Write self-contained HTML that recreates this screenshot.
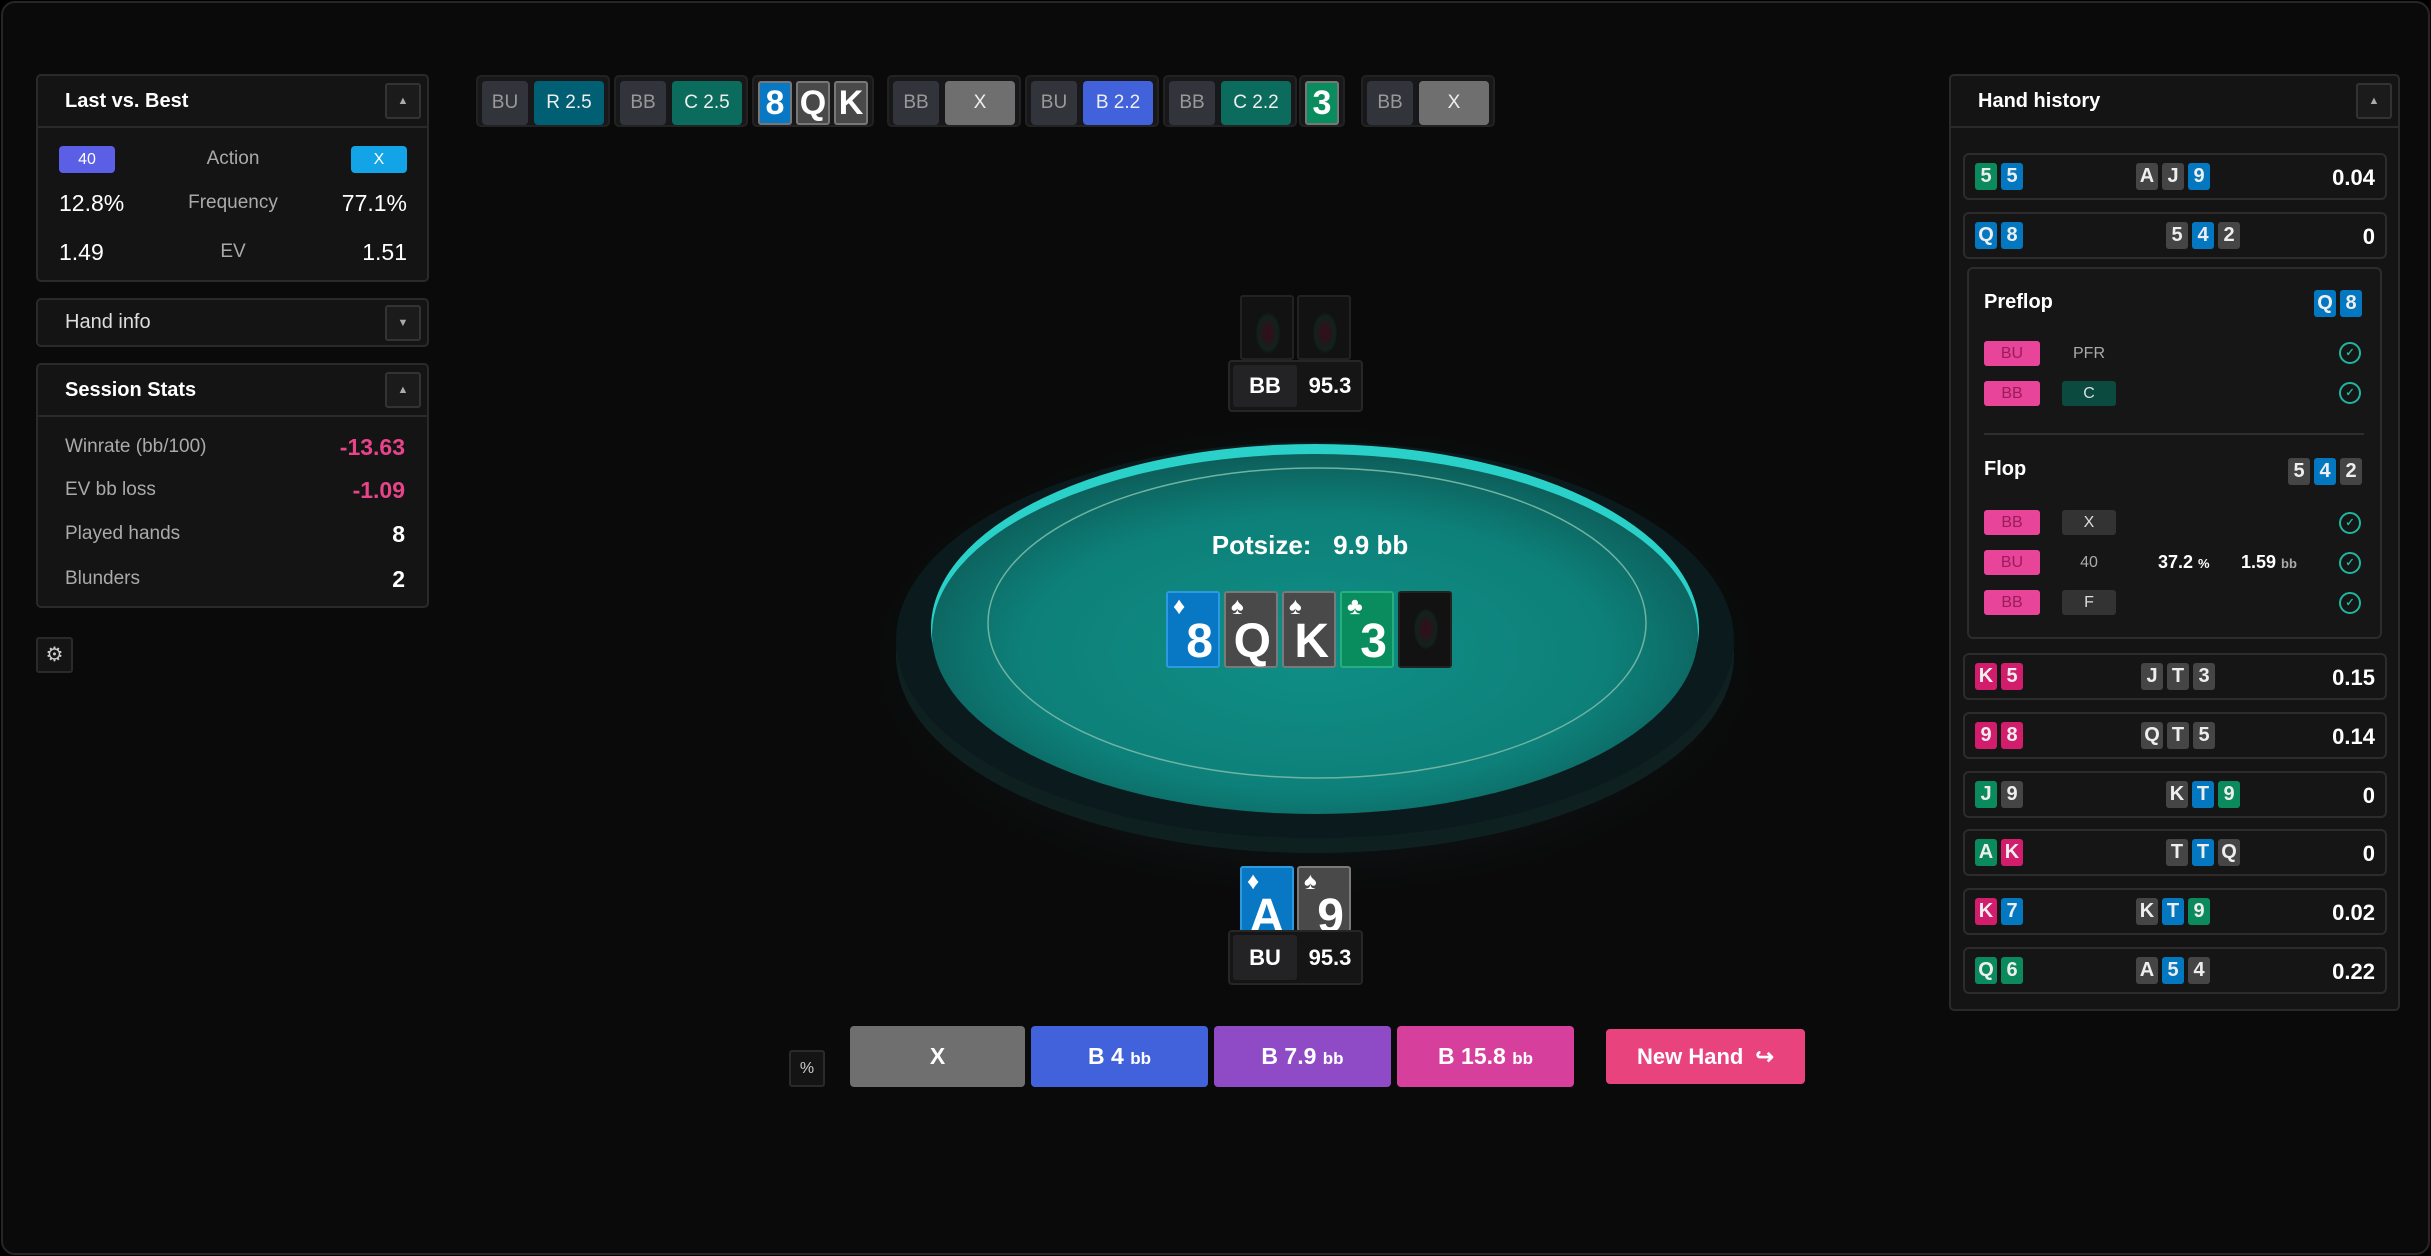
<!DOCTYPE html>
<html><head><meta charset="utf-8"><style>
*{box-sizing:border-box;margin:0;padding:0}
html,body{width:2431px;height:1256px;background:#000;overflow:hidden;font-family:"Liberation Sans",sans-serif;color:#fff}
.frame{position:absolute;left:1px;top:1px;width:2429px;height:1254px;background:#0a0a0a;border:2px solid #262626;border-radius:14px}
.abs{position:absolute}
.panel{position:absolute;background:#141414;border:2px solid #2a2a2a;border-radius:5px}
.phead{position:absolute;left:0;right:0;top:0;height:52px;border-bottom:2px solid #2a2a2a;font-weight:bold;font-size:20px;line-height:50px;padding-left:27px}
.tog{position:absolute;right:6px;top:7px;width:36px;height:36px;border:2px solid #333;background:#1b1b1b;border-radius:3px;color:#aaa;font-size:11px;text-align:center;line-height:32px}
.grp{position:absolute;top:75px;height:52px;background:#18181a;border:2px solid #222;border-radius:5px;display:flex;gap:6px;padding:4px}
.grp div{height:44px;border-radius:4px;font-size:19px;line-height:44px;text-align:center}
.lab{width:46px;background:#31343b;color:#999}
.act{width:70px;color:#eee}
.grp .tc{width:34px;height:44px;border:2px solid #777;border-radius:3px;font-size:34px;line-height:40px;text-align:center;color:#fff;font-weight:bold}
.card{position:absolute;width:54px;height:77px;border-radius:3px;border:2px solid rgba(255,255,255,.25)}
.card .s{position:absolute;left:5px;top:0;font-size:24px}
.card .r{position:absolute;right:5px;bottom:-3px;font-size:48px;font-weight:bold}
.blue{background:#0878c4;border-color:#2c9ae0}
.gray{background:#494949;border-color:#7a7a7a}
.green{background:#0a8d5e;border-color:#25b07e}
.back{background:#121212;border-color:#222}
.back:after{content:"";position:absolute;left:14px;top:16px;width:24px;height:40px;border-radius:50%;background:radial-gradient(#3a1020 20%,#0f2a20 60%,transparent 75%);opacity:.7}
.chip{display:inline-block;width:22px;height:27px;border-radius:3px;font-size:20px;font-weight:bold;line-height:27px;text-align:center;margin-right:4px;color:#eee}
.cg{background:#0b8a5e}.cb{background:#0377c0}.cx{background:#454545}.cp{background:#d21d6c}
.row{position:absolute;left:1963px;width:424px;height:47px;background:#151515;border:2px solid #2c2c2c;border-radius:6px}
.row .h{position:absolute;left:10px;top:8px}
.row .b{position:absolute;top:8px;left:0;right:0;text-align:center}
.row .v{position:absolute;right:10px;top:0;line-height:45px;font-size:22px;font-weight:bold}
.pb{position:absolute;left:1984px;width:56px;height:25px;background:#e8449a;border-radius:3px;color:#9c1c5a;font-size:16px;line-height:25px;text-align:center}
.ab{position:absolute;left:2062px;width:54px;height:25px;border-radius:3px;font-size:16px;line-height:25px;text-align:center;color:#ddd}
.ck{position:absolute;left:2339px;width:22px;height:22px;border:2px solid #1fb5a0;border-radius:50%;color:#1fb5a0;font-size:11px;text-align:center;line-height:18px;font-weight:bold}
.btn{position:absolute;top:1026px;height:61px;border-radius:4px;text-align:center;line-height:61px;font-size:23px;font-weight:bold;color:#fff}
.btn small{font-size:17px}
.srow{position:absolute;left:27px;right:22px;height:32px;line-height:32px;font-size:19px;color:#aaa}
.srow b{position:absolute;right:0;top:0;font-size:23px;color:#fff}
.lv{position:absolute;left:21px;right:20px;height:32px;line-height:32px}
.lv .l{position:absolute;left:0;font-size:23px}
.lv .c{position:absolute;left:0;right:0;text-align:center;font-size:19px;color:#aaa}
.lv .rr{position:absolute;right:0;font-size:23px}
</style></head><body><div class="frame"></div>

<!-- Last vs Best -->
<div class="panel" style="left:36px;top:74px;width:393px;height:208px">
 <div class="phead">Last vs. Best<div class="tog">▲</div></div>
 <div class="lv" style="top:67px"><div class="l" style="top:3px;width:56px;height:27px;background:#5b5fe6;border-radius:4px;font-size:16px;line-height:27px;text-align:center">40</div><div class="c">Action</div><div class="rr" style="top:3px;width:56px;height:27px;background:#12a4e6;border-radius:4px;font-size:16px;line-height:27px;text-align:center">X</div></div>
 <div class="lv" style="top:111px"><div class="l">12.8%</div><div class="c">Frequency</div><div class="rr">77.1%</div></div>
 <div class="lv" style="top:160px"><div class="l">1.49</div><div class="c">EV</div><div class="rr">1.51</div></div>
</div>
<div class="panel" style="left:36px;top:298px;width:393px;height:49px">
 <div class="phead" style="border:none;height:47px;line-height:45px;font-weight:normal;color:#ddd">Hand info<div class="tog" style="top:5px">▼</div></div>
</div>
<div class="panel" style="left:36px;top:363px;width:393px;height:245px">
 <div class="phead">Session Stats<div class="tog">▲</div></div>
 <div class="srow" style="top:66px">Winrate (bb/100)<b style="color:#e8448a">-13.63</b></div>
 <div class="srow" style="top:109px">EV bb loss<b style="color:#e8448a">-1.09</b></div>
 <div class="srow" style="top:153px">Played hands<b>8</b></div>
 <div class="srow" style="top:198px">Blunders<b>2</b></div>
</div>
<div class="abs" style="left:36px;top:637px;width:37px;height:36px;border:2px solid #2a2a2a;border-radius:3px;background:#141414;text-align:center;line-height:32px;color:#ccc;font-size:20px">⚙</div>

<!-- top bar -->
<div class="grp" style="left:476px"><div class="lab">BU</div><div class="act" style="background:#005f73">R 2.5</div></div>
<div class="grp" style="left:614px"><div class="lab">BB</div><div class="act" style="background:#0b6b5c">C 2.5</div></div>
<div class="grp" style="left:752px;gap:4px"><div class="tc blue">8</div><div class="tc gray">Q</div><div class="tc gray">K</div></div>
<div class="grp" style="left:887px"><div class="lab">BB</div><div class="act" style="background:#6f6f6f">X</div></div>
<div class="grp" style="left:1025px"><div class="lab">BU</div><div class="act" style="background:#4162db">B 2.2</div></div>
<div class="grp" style="left:1163px"><div class="lab">BB</div><div class="act" style="background:#0b6b5c">C 2.2</div></div>
<div class="grp" style="left:1299px"><div class="tc green">3</div></div>
<div class="grp" style="left:1361px"><div class="lab">BB</div><div class="act" style="background:#6f6f6f">X</div></div>

<!-- table -->
<svg class="abs" style="left:0;top:0" width="2431" height="1256">
 <defs>
  <radialGradient id="felt" cx="50%" cy="55%" r="55%"><stop offset="0" stop-color="#0f8f86"/><stop offset="0.7" stop-color="#0d8079"/><stop offset="1" stop-color="#0d5e5a"/></radialGradient>
  <radialGradient id="glow" cx="50%" cy="50%" r="50%"><stop offset="0.7" stop-color="#0e1416"/><stop offset="1" stop-color="#0a0a0a" stop-opacity="0"/></radialGradient>
 </defs>
 <ellipse cx="1315" cy="660" rx="470" ry="250" fill="url(#glow)"/>
 <ellipse cx="1315" cy="655" rx="419" ry="198" fill="#0f2020"/>
 <ellipse cx="1315" cy="640" rx="419" ry="198" fill="#0b1a1d"/>
 <ellipse cx="1315" cy="628" rx="384" ry="184" fill="#2ad1c9"/>
 <ellipse cx="1315" cy="634" rx="383" ry="180" fill="url(#felt)"/>
 <ellipse cx="1317" cy="623" rx="329" ry="155" fill="none" stroke="#6fb3a3" stroke-width="1.5"/>
</svg>
<div class="abs" style="left:1160px;top:530px;width:300px;text-align:center;font-size:26px;font-weight:bold">Potsize:&nbsp;&nbsp; 9.9 bb</div>
<div class="card blue" style="left:1166px;top:591px"><span class="s">♦</span><span class="r">8</span></div>
<div class="card gray" style="left:1224px;top:591px"><span class="s">♠</span><span class="r">Q</span></div>
<div class="card gray" style="left:1282px;top:591px"><span class="s">♠</span><span class="r">K</span></div>
<div class="card green" style="left:1340px;top:591px"><span class="s">♣</span><span class="r">3</span></div>
<div class="card back" style="left:1398px;top:591px"></div>

<!-- BB seat -->
<div class="card back" style="left:1240px;top:295px;height:65px"></div>
<div class="card back" style="left:1297px;top:295px;height:65px"></div>
<div class="abs" style="left:1228px;top:360px;width:135px;height:52px;background:#151515;border:2px solid #262626;border-radius:4px">
 <div class="abs" style="left:3px;top:3px;width:64px;height:42px;background:#232326;border-radius:3px;text-align:center;line-height:42px;font-size:22px;font-weight:bold">BB</div>
 <div class="abs" style="left:70px;top:3px;width:60px;text-align:center;line-height:42px;font-size:22px;font-weight:bold">95.3</div>
</div>
<!-- BU seat -->
<div class="card blue" style="left:1240px;top:866px;height:66px;overflow:hidden"><span class="s">♦</span><span class="r" style="bottom:-14px;right:8px">A</span></div>
<div class="card gray" style="left:1297px;top:866px;height:66px;overflow:hidden"><span class="s">♠</span><span class="r" style="bottom:-14px">9</span></div>
<div class="abs" style="left:1228px;top:930px;width:135px;height:55px;background:#151515;border:2px solid #262626;border-radius:4px">
 <div class="abs" style="left:3px;top:3px;width:64px;height:45px;background:#232326;border-radius:3px;text-align:center;line-height:45px;font-size:22px;font-weight:bold">BU</div>
 <div class="abs" style="left:70px;top:3px;width:60px;text-align:center;line-height:45px;font-size:22px;font-weight:bold">95.3</div>
</div>

<!-- buttons -->
<div class="abs" style="left:789px;top:1050px;width:36px;height:37px;border:2px solid #2a2a2a;background:#141414;border-radius:3px;text-align:center;line-height:33px;font-size:16px;color:#ccc">%</div>
<div class="btn" style="left:850px;width:175px;background:#6f6f6f">X</div>
<div class="btn" style="left:1031px;width:177px;background:#4162db">B 4 <small>bb</small></div>
<div class="btn" style="left:1214px;width:177px;background:#8f4bc6">B 7.9 <small>bb</small></div>
<div class="btn" style="left:1397px;width:177px;background:#d63f9c">B 15.8 <small>bb</small></div>
<div class="btn" style="left:1606px;top:1029px;height:55px;line-height:55px;width:199px;background:#e8437c;font-size:22px">New Hand&nbsp; ↪</div>

<!-- hand history -->
<div class="panel" style="left:1949px;top:74px;width:451px;height:937px">
 <div class="phead">Hand history<div class="tog">▲</div></div>
</div>
<div class="row" style="top:153px"><div class="h"><span class="chip cg">5</span><span class="chip cb">5</span></div><div class="b"><span class="chip cx">A</span><span class="chip cx">J</span><span class="chip cb">9</span></div><div class="v">0.04</div></div>
<div class="row" style="top:212px"><div class="h"><span class="chip cb">Q</span><span class="chip cb">8</span></div><div class="b" style="left:60px"><span class="chip cx">5</span><span class="chip cb">4</span><span class="chip cx">2</span></div><div class="v">0</div></div>
<div class="abs" style="left:1967px;top:267px;width:415px;height:372px;background:#161616;border:2px solid #2c2c2c;border-radius:6px"></div>
<div class="abs" style="left:1984px;top:291px;font-size:20px;font-weight:bold">Preflop</div>
<div class="abs" style="left:2314px;top:290px"><span class="chip cb">Q</span><span class="chip cb" style="margin:0">8</span></div>
<div class="pb" style="top:341px">BU</div><div class="abs" style="left:2062px;top:341px;width:54px;text-align:center;line-height:25px;font-size:16px;color:#aaa">PFR</div><div class="ck" style="top:342px">✓</div>
<div class="pb" style="top:381px">BB</div><div class="ab" style="top:381px;background:#0b4a3e">C</div><div class="ck" style="top:382px">✓</div>
<div class="abs" style="left:1984px;top:433px;width:380px;height:2px;background:#2e2e2e"></div>
<div class="abs" style="left:1984px;top:458px;font-size:20px;font-weight:bold">Flop</div>
<div class="abs" style="left:2288px;top:458px"><span class="chip cx">5</span><span class="chip cb">4</span><span class="chip cx" style="margin:0">2</span></div>
<div class="pb" style="top:510px">BB</div><div class="ab" style="top:510px;background:#333">X</div><div class="ck" style="top:512px">✓</div>
<div class="pb" style="top:550px">BU</div><div class="abs" style="left:2062px;top:550px;width:54px;text-align:center;line-height:25px;font-size:16px;color:#aaa">40</div>
<div class="abs" style="left:2158px;top:550px;line-height:25px;font-size:18px;font-weight:bold">37.2 <small style="font-size:13px">%</small></div>
<div class="abs" style="left:2241px;top:550px;line-height:25px;font-size:18px;font-weight:bold">1.59 <small style="font-size:13px;color:#aaa">bb</small></div>
<div class="ck" style="top:552px">✓</div>
<div class="pb" style="top:590px">BB</div><div class="ab" style="top:590px;background:#333">F</div><div class="ck" style="top:592px">✓</div>

<div class="row" style="top:653px"><div class="h"><span class="chip cp">K</span><span class="chip cp">5</span></div><div class="b" style="left:10px"><span class="chip cx">J</span><span class="chip cx">T</span><span class="chip cx">3</span></div><div class="v">0.15</div></div>
<div class="row" style="top:712px"><div class="h"><span class="chip cp">9</span><span class="chip cp">8</span></div><div class="b" style="left:10px"><span class="chip cx">Q</span><span class="chip cx">T</span><span class="chip cx">5</span></div><div class="v">0.14</div></div>
<div class="row" style="top:771px"><div class="h"><span class="chip cg">J</span><span class="chip cx">9</span></div><div class="b" style="left:60px"><span class="chip cx">K</span><span class="chip cb">T</span><span class="chip cg">9</span></div><div class="v">0</div></div>
<div class="row" style="top:829px"><div class="h"><span class="chip cg">A</span><span class="chip cp">K</span></div><div class="b" style="left:60px"><span class="chip cx">T</span><span class="chip cb">T</span><span class="chip cx">Q</span></div><div class="v">0</div></div>
<div class="row" style="top:888px"><div class="h"><span class="chip cp">K</span><span class="chip cb">7</span></div><div class="b"><span class="chip cx">K</span><span class="chip cb">T</span><span class="chip cg">9</span></div><div class="v">0.02</div></div>
<div class="row" style="top:947px"><div class="h"><span class="chip cg">Q</span><span class="chip cg">6</span></div><div class="b"><span class="chip cx">A</span><span class="chip cb">5</span><span class="chip cx">4</span></div><div class="v">0.22</div></div>
</body></html>
